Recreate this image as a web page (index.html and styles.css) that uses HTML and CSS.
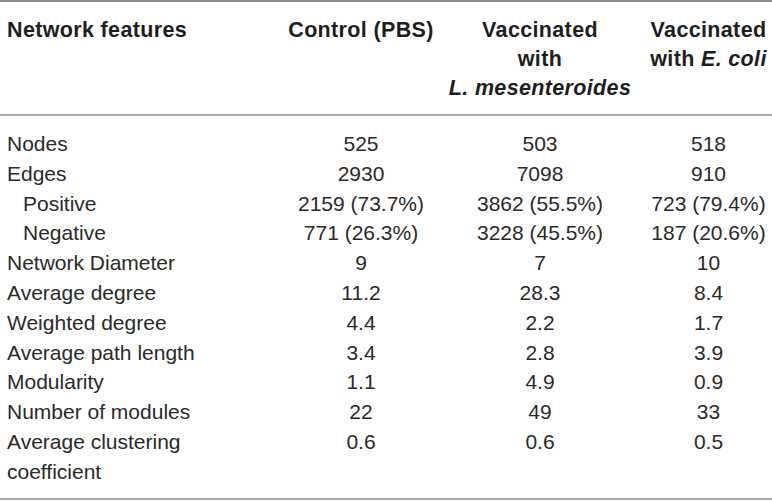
FILE: index.html
```html
<!DOCTYPE html>
<html>
<head>
<meta charset="utf-8">
<link rel="stylesheet" href="styles.css">
</head>
<body>
<table class="tbl">
  <colgroup>
    <col class="c0"><col class="c1"><col class="c2"><col class="c3">
  </colgroup>
  <thead>
    <tr>
      <th class="lab">Network features</th>
      <th>Control (PBS)</th>
      <th>Vaccinated<br>with<br><i>L. mesenteroides</i></th>
      <th>Vaccinated<br>with <i>E. coli</i></th>
    </tr>
  </thead>
  <tbody>
    <tr class="first"><td class="lab">Nodes</td><td>525</td><td>503</td><td>518</td></tr>
    <tr><td class="lab">Edges</td><td>2930</td><td>7098</td><td>910</td></tr>
    <tr><td class="lab sub">Positive</td><td>2159 (73.7%)</td><td>3862 (55.5%)</td><td>723 (79.4%)</td></tr>
    <tr><td class="lab sub">Negative</td><td>771 (26.3%)</td><td>3228 (45.5%)</td><td>187 (20.6%)</td></tr>
    <tr><td class="lab">Network Diameter</td><td>9</td><td>7</td><td>10</td></tr>
    <tr><td class="lab">Average degree</td><td>11.2</td><td>28.3</td><td>8.4</td></tr>
    <tr><td class="lab">Weighted degree</td><td>4.4</td><td>2.2</td><td>1.7</td></tr>
    <tr><td class="lab">Average path length</td><td>3.4</td><td>2.8</td><td>3.9</td></tr>
    <tr><td class="lab">Modularity</td><td>1.1</td><td>4.9</td><td>0.9</td></tr>
    <tr><td class="lab">Number of modules</td><td>22</td><td>49</td><td>33</td></tr>
    <tr class="last"><td class="lab">Average clustering<br>coefficient</td><td>0.6</td><td>0.6</td><td>0.5</td></tr>
  </tbody>
</table>
</body>
</html>
```

FILE: styles.css
```css
html, body {
  margin: 0;
  padding: 0;
  background: #ffffff;
}
.tbl {
  width: 772px;
  border-collapse: collapse;
  table-layout: fixed;
  font-family: "Liberation Sans", Arial, sans-serif;
  font-size: 21px;
  color: #2a2a2a;
  border-top: 2px solid #8e8e8e;
  border-bottom: 2px solid #a8a8a8;
}
.c0 { width: 287px; }
.c1 { width: 148px; }
.c2 { width: 210px; }
.c3 { width: 127px; }
.tbl th {
  font-weight: bold;
  font-size: 21.5px;
  color: #1e1e1e;
  letter-spacing: 0.35px;
  line-height: 29px;
  text-align: center;
  vertical-align: top;
  padding: 14px 0 11px 0;
  white-space: nowrap;
  border-bottom: 2px solid #a8a8a8;
}
.tbl td {
  line-height: 29.8px;
  text-align: center;
  vertical-align: top;
  padding: 0;
  white-space: nowrap;
}
.tbl .lab {
  text-align: left;
  padding-left: 7px;
}
.tbl .sub {
  padding-left: 23px;
}
.tbl .first td {
  padding-top: 13px;
}
.tbl .last td {
  padding-bottom: 11px;
}
```
